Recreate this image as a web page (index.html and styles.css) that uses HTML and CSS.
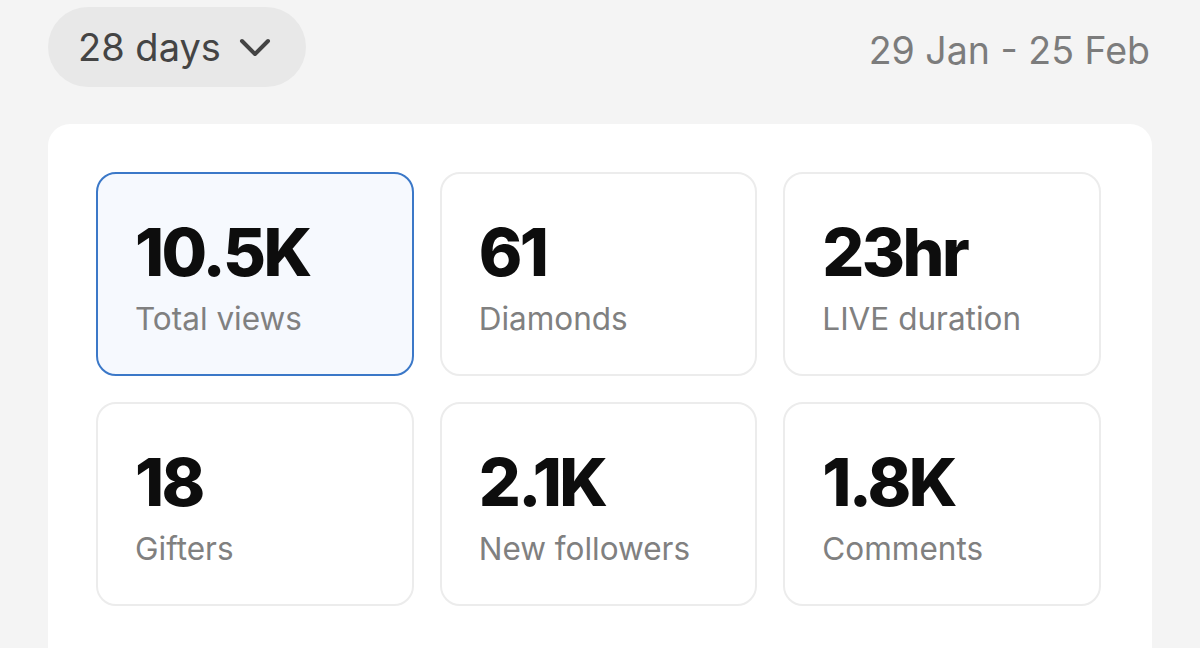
FILE: index.html
```html
<!DOCTYPE html>
<html>
<head>
<meta charset="utf-8">
<link rel="stylesheet" href="styles.css">
</head>
<body>
<div class="page">
  <div class="header">
    <div class="pill">
      <span class="pill-text">28 days</span>
      <svg class="chev" width="32" height="20" viewBox="0 0 32 20"><path d="M3 3 L16 16 L29 3" fill="none" stroke="#444" stroke-width="4" stroke-linecap="round" stroke-linejoin="round"/></svg>
    </div>
    <div class="range">29 Jan - 25 Feb</div>
  </div>
  <div class="panel">
    <div class="grid">
      <div class="card active"><div class="num">10.5K</div><div class="label">Total views</div></div>
      <div class="card"><div class="num">61</div><div class="label">Diamonds</div></div>
      <div class="card"><div class="num">23hr</div><div class="label">LIVE duration</div></div>
      <div class="card"><div class="num">18</div><div class="label">Gifters</div></div>
      <div class="card"><div class="num">2.1K</div><div class="label">New followers</div></div>
      <div class="card"><div class="num">1.8K</div><div class="label">Comments</div></div>
    </div>
  </div>
</div>
</body>
</html>
```
FILE: styles.css
```css
* { box-sizing: border-box; }
html, body { margin: 0; padding: 0; }
body {
  background: #f4f4f4;
  font-family: Inter, "Liberation Sans", sans-serif;
  width: 1200px;
  height: 648px;
  overflow: hidden;
}
.page { padding: 7px 48px 0 48px; }
.header {
  display: flex;
  align-items: center;
  justify-content: space-between;
  height: 80px;
}
.pill {
  display: flex;
  align-items: center;
  gap: 18px;
  height: 80px;
  width: 258px;
  padding-left: 30px;
  border-radius: 40px;
  background: #e8e8e8;
}
.pill-text { font-size: 38px; color: #444; }
.chev { margin-top: 2px; }
.range { font-size: 37.5px; color: #7c7c7c; padding-right: 2px; margin-top: 6px; }
.panel {
  margin-top: 37px;
  background: #fff;
  border-radius: 22px 22px 0 0;
  padding: 48px 51px 0 48px;
  height: 524px;
}
.grid {
  display: grid;
  grid-template-columns: repeat(3, 1fr);
  gap: 26px;
}
.card {
  height: 204px;
  border: 2px solid #ececec;
  border-radius: 20px;
  padding: 40px 0 0 37px;
}
.card.active { border-color: #3b78c8; background: #f6f9fe; }
.num { font-size: 66px; font-weight: 800; color: #0d0d0d; line-height: 76px; letter-spacing: -2.6px; }
.label { font-size: 31.5px; color: #808080; margin-top: 9px; }
```
